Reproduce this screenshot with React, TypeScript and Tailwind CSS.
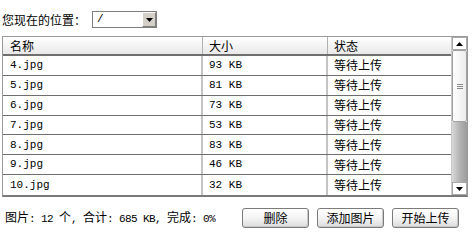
import { ReactNode } from 'react'

const files = [
  { name: '4.jpg', size: '93 KB' },
  { name: '5.jpg', size: '81 KB' },
  { name: '6.jpg', size: '73 KB' },
  { name: '7.jpg', size: '53 KB' },
  { name: '8.jpg', size: '83 KB' },
  { name: '9.jpg', size: '46 KB' },
  { name: '10.jpg', size: '32 KB' },
]

// half-width text, close to the 6px latin cells of the original bitmap font
function A({ children }: { children: ReactNode }) {
  return <span className="font-['Liberation_Mono',monospace] text-[11px] tracking-[-0.6px]">{children}</span>
}

function Btn({ children }: { children: ReactNode }) {
  return (
    <button className="w-[67px] h-[20px] rounded-[3px] border border-[#7b7b7b] bg-linear-to-b from-white via-[#f4f4f4] to-[#dcdcdc] text-[12px] leading-none shadow-[inset_-1px_-1px_0_#c8c8c8]">
      {children}
    </button>
  )
}

function Triangle({ up }: { up?: boolean }) {
  return (
    <svg width="7" height="4" viewBox="0 0 7 4">
      <polygon points={up ? '3.5,0 7,4 0,4' : '0,0 7,0 3.5,4'} fill="#000" />
    </svg>
  )
}

export default function App() {
  return (
    <div className="w-[473px] h-[241px] bg-white text-black text-[12px] font-['Noto_Sans_CJK_SC',sans-serif]">
      {/* 位置选择 */}
      <div className="flex items-center pl-[2px] pt-[11px] h-[28px]">
        <span className="leading-[16px]">您现在的位置：</span>
        <div className="ml-[6px] flex items-center w-[65px] h-[17px] border border-[#7f7f7f] bg-white">
          <span className="flex-1 pl-[4px] font-['Liberation_Mono',monospace] text-[11px] leading-none">/</span>
          <div className="w-[14px] h-[15px] flex items-center justify-center bg-[#d4d0c8] border border-t-white border-l-white border-r-[#808080] border-b-[#808080]">
            <Triangle />
          </div>
        </div>
      </div>

      {/* 文件列表 */}
      <div className="ml-[2px] mt-[8px] w-[466px] h-[161px] flex border border-[#9a9a9a] border-b-2 border-b-[#7a7a7a]">
        <div className="flex-1 flex flex-col">
          <div className="flex h-[19px] border-b-2 border-b-[#6e6e6e] bg-linear-to-b from-white to-[#e9e9e9]">
            <div className="w-[200px] pl-[7px] flex items-center border-r border-r-[#b0b0b0]">名称</div>
            <div className="w-[125px] pl-[6px] flex items-center border-r border-r-[#b0b0b0]">大小</div>
            <div className="flex-1 pl-[6px] flex items-center">状态</div>
          </div>
          {files.map((f, i) => (
            <div key={f.name} className={`flex h-[20px] ${i < files.length - 1 ? 'border-b border-b-[#6e6e6e]' : ''}`}>
              <div className="w-[200px] pl-[7px] flex items-center border-r-2 border-r-[#c4c4c4] font-['Liberation_Mono',monospace] text-[11px]">{f.name}</div>
              <div className="w-[125px] pl-[6px] flex items-center border-r-2 border-r-[#c4c4c4] font-['Liberation_Mono',monospace] text-[11px]">{f.size}</div>
              <div className="flex-1 pl-[6px] flex items-center">等待上传</div>
            </div>
          ))}
        </div>

        {/* 滚动条 */}
        <div className="w-[16px] flex flex-col bg-[#f2f2f2] border-l border-l-[#c8c8c8]">
          <div className="h-[13px] flex items-center justify-center bg-white border border-[#a8a8a8]">
            <Triangle up />
          </div>
          <div className="h-[72px] flex items-center justify-center rounded-[2px] border border-[#a0a0a0] bg-linear-to-r from-white to-[#ececec]">
            <div className="flex flex-col gap-[1px]">
              <div className="w-[6px] h-px bg-[#8a8a8a]" />
              <div className="w-[6px] h-px bg-[#8a8a8a]" />
              <div className="w-[6px] h-px bg-[#8a8a8a]" />
            </div>
          </div>
          <div className="flex-1 bg-linear-to-r from-[#d8d8d8] via-[#b4b4b4] to-[#9c9c9c]" />
          <div className="h-[13px] flex items-center justify-center bg-white border border-[#a8a8a8]">
            <Triangle />
          </div>
        </div>
      </div>

      {/* 状态与操作 */}
      <div className="flex items-center mt-[11px] pl-[5px] pr-[14px]">
        <span className="leading-none whitespace-pre">
          图片<A>: 12 </A>个<A>, </A>合计<A>: 685 KB, </A>完成<A>: 0%</A>
        </span>
        <div className="ml-auto flex gap-[8px]">
          <Btn>删除</Btn>
          <Btn>添加图片</Btn>
          <Btn>开始上传</Btn>
        </div>
      </div>
    </div>
  )
}
